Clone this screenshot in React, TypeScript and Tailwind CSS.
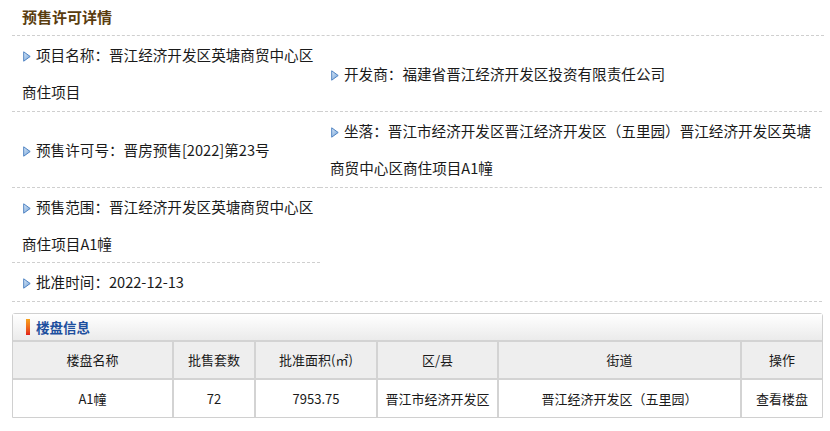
import React from "react";

const Arrow = () => (
  <svg width="8" height="11" viewBox="0 0 8 11" className="inline-block align-[-1px] mr-[5px] ml-[1px]">
    <defs>
      <linearGradient id="ag" x1="0" y1="0" x2="1" y2="1">
        <stop offset="0" stopColor="#dbe9f8" />
        <stop offset="1" stopColor="#6e9fd6" />
      </linearGradient>
    </defs>
    <path d="M0.7 0.8 L7.2 5.5 L0.7 10.2 Z" fill="url(#ag)" stroke="#4f83c2" strokeWidth="1" strokeLinejoin="round" />
  </svg>
);

const cellCls = "align-middle pl-[10px] leading-[37px] text-[14.6px] text-[#1a1a1a]";

export default function App() {
  const font = { fontFamily: '"Microsoft YaHei", "Noto Sans CJK SC", "Noto Sans", sans-serif' };
  return (
    <div className="w-[830px] h-[431px] bg-white pl-[12px] pr-[6px]" style={font}>
      <div className="w-[812px] h-[36px] border-b border-dashed border-[#cfcfcf] pl-[10px] flex items-center">
        <span className="text-[15px] font-bold text-[#5a3d0f]">预售许可详情</span>
      </div>
      <table className="w-[810px] table-fixed border-collapse">
        <colgroup>
          <col className="w-[308px]" />
          <col className="w-[502px]" />
        </colgroup>
        <tbody>
          <tr className="border-b border-dashed border-[#cfcfcf]">
            <td className={cellCls + " pb-px"}>
              <Arrow />项目名称：晋江经济开发区英塘商贸中心区商住项目
            </td>
            <td className={cellCls}>
              <Arrow />开发商：福建省晋江经济开发区投资有限责任公司
            </td>
          </tr>
          <tr className="border-b border-dashed border-[#cfcfcf]">
            <td className={cellCls + " pb-px"}>
              <Arrow />预售许可号：晋房预售[2022]第23号
            </td>
            <td className={cellCls + " pb-px"}>
              <Arrow />坐落：晋江市经济开发区晋江经济开发区（五里园）晋江经济开发区英塘商贸中心区商住项目A1幢
            </td>
          </tr>
          <tr>
            <td className={cellCls + " border-b border-dashed border-[#cfcfcf]"}>
              <Arrow />预售范围：晋江经济开发区英塘商贸中心区商住项目A1幢
            </td>
            <td></td>
          </tr>
          <tr className="border-b border-dashed border-[#cfcfcf]">
            <td colSpan={2} className={cellCls + " pb-px"}>
              <Arrow />批准时间：2022-12-13
            </td>
          </tr>
        </tbody>
      </table>

      <div className="mt-[11px] w-[811px] border border-[#d0d0d0] rounded-t-[3px]">
        <div className="h-[28px] flex items-center pl-[13px] bg-gradient-to-b from-white to-[#ebebeb] border-b-2 border-[#d3d3d3]">
          <span className="w-[4px] h-[16px] bg-gradient-to-b from-[#f7a21b] to-[#e21b1b] mr-[6px]" />
          <span className="text-[13.5px] font-bold text-[#1d4f9e]">楼盘信息</span>
        </div>
        <table className="w-full table-fixed border-collapse text-[13px] text-[#1a1a1a]">
          <colgroup>
            <col className="w-[160px]" />
            <col className="w-[82px]" />
            <col className="w-[122px]" />
            <col className="w-[121px]" />
            <col className="w-[243px]" />
            <col />
          </colgroup>
          <thead>
            <tr className="bg-[#eeeeee] h-[37px]">
              <th className="font-normal border-r-2 border-b-2 border-[#d3d3d3]">楼盘名称</th>
              <th className="font-normal border-r-2 border-b-2 border-[#d3d3d3]">批售套数</th>
              <th className="font-normal border-r-2 border-b-2 border-[#d3d3d3]">批准面积(㎡)</th>
              <th className="font-normal border-r-2 border-b-2 border-[#d3d3d3]">区/县</th>
              <th className="font-normal border-r-2 border-b-2 border-[#d3d3d3]">街道</th>
              <th className="font-normal border-b-2 border-[#d3d3d3]">操作</th>
            </tr>
          </thead>
          <tbody>
            <tr className="h-[38px] text-center">
              <td className="border-r-2 border-[#d3d3d3]">A1幢</td>
              <td className="border-r-2 border-[#d3d3d3]">72</td>
              <td className="border-r-2 border-[#d3d3d3]">7953.75</td>
              <td className="border-r-2 border-[#d3d3d3]">晋江市经济开发区</td>
              <td className="border-r-2 border-[#d3d3d3]">晋江经济开发区（五里园）</td>
              <td>查看楼盘</td>
            </tr>
          </tbody>
        </table>
      </div>
    </div>
  );
}
